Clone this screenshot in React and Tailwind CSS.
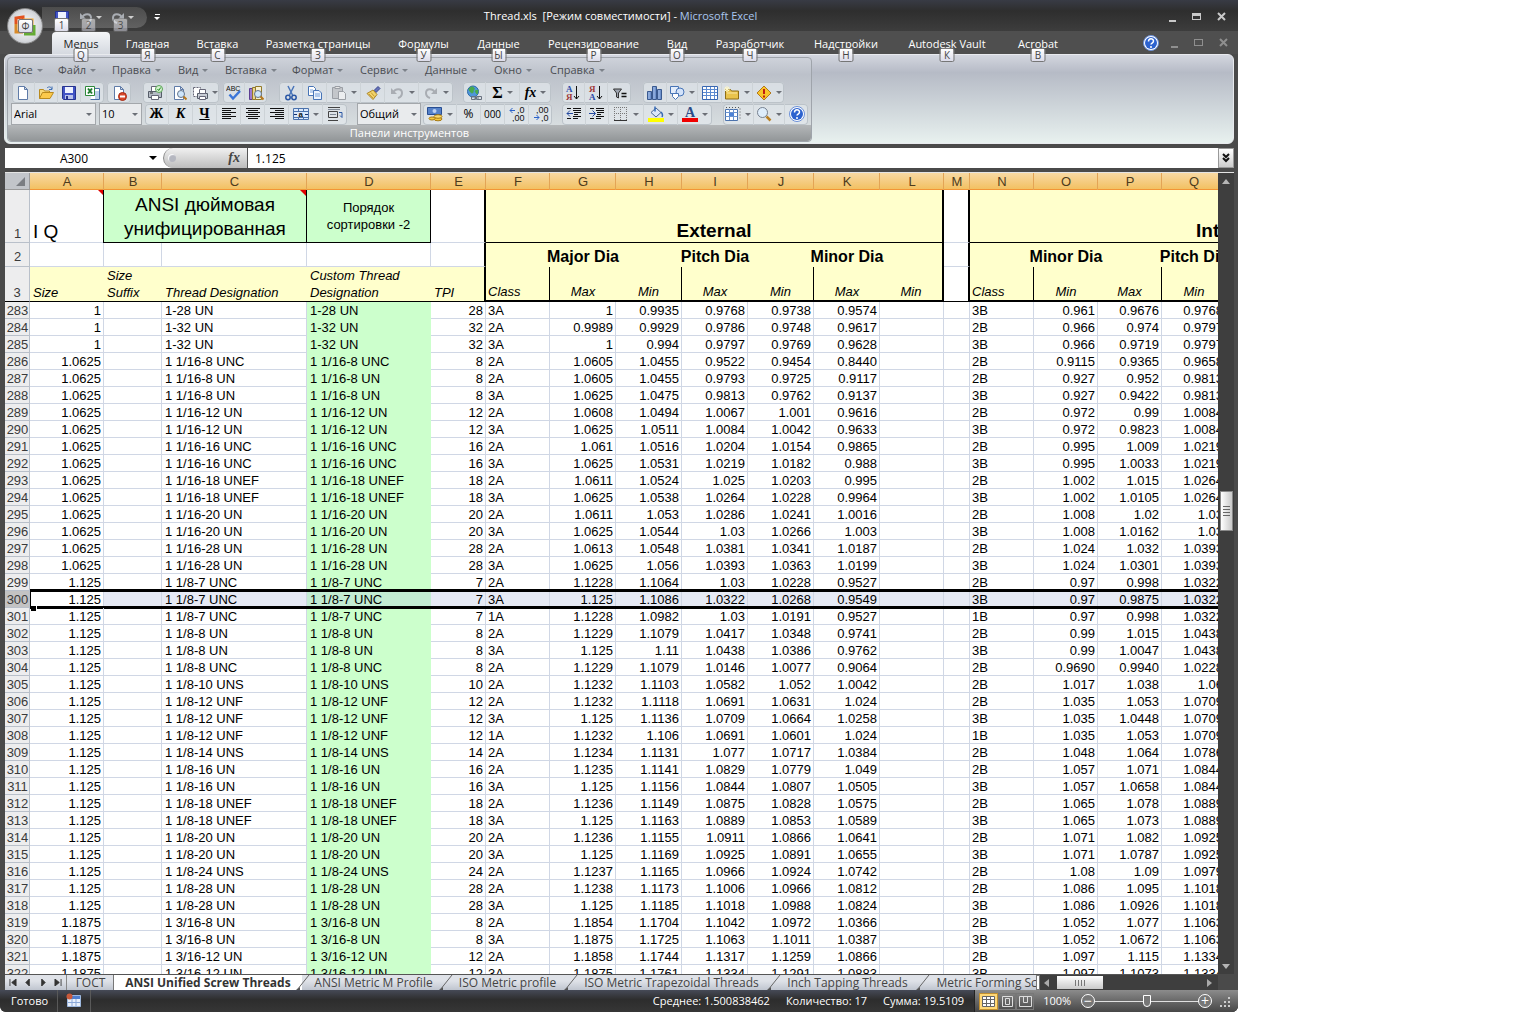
const tabs = [
  { label: 'Menus', hint: 'Q', width: 'w-[58px] mr-[2px]', active: true },
  { label: 'Главная', hint: 'Я', width: 'w-[71px]' },
  { label: 'Вставка', hint: 'С', width: 'w-[69px]' },
  { label: 'Разметка страницы', hint: 'З', width: 'w-[132px]' },
  { label: 'Формулы', hint: 'У', width: 'w-[79px]' },
  { label: 'Данные', hint: 'Ы', width: 'w-[71px]' },
  { label: 'Рецензирование', hint: 'Р', width: 'w-[119px]' },
  { label: 'Вид', hint: 'О', width: 'w-[48px]' },
  { label: 'Разработчик', hint: 'Ч', width: 'w-[98px]' },
  { label: 'Надстройки', hint: 'Н', width: 'w-[94px]' },
  { label: 'Autodesk Vault', hint: 'К', width: 'w-[108px]' },
  { label: 'Acrobat', hint: 'В', width: 'w-[74px]' },
];

const menus = [
  ['Все', 'w-[44px]'],
  ['Файл', 'w-[54px]'],
  ['Правка', 'w-[66px]'],
  ['Вид', 'w-[47px]'],
  ['Вставка', 'w-[67px]'],
  ['Формат', 'w-[68px]'],
  ['Сервис', 'w-[65px]'],
  ['Данные', 'w-[69px]'],
  ['Окно', 'w-[56px]'],
  ['Справка', 'w-[60px]'],
];

const columns = [
  ['A', 'w-[74px]'],
  ['B', 'w-[58px]'],
  ['C', 'w-[145px]'],
  ['D', 'w-[124px]'],
  ['E', 'w-[55px]'],
  ['F', 'w-[64px]'],
  ['G', 'w-[66px]'],
  ['H', 'w-[66px]'],
  ['I', 'w-[66px]'],
  ['J', 'w-[66px]'],
  ['K', 'w-[66px]'],
  ['L', 'w-[64px]'],
  ['M', 'w-[26px]'],
  ['N', 'w-[64px]'],
  ['O', 'w-[64px]'],
  ['P', 'w-[64px]'],
  ['Q', 'w-[64px]'],
];

// row | size | designation | tpi | class | G H I J K | class | O P Q
const data = `283|1|1-28 UN|28|3A|1|0.9935|0.9768|0.9738|0.9574|3B|0.961|0.9676|0.9768
284|1|1-32 UN|32|2A|0.9989|0.9929|0.9786|0.9748|0.9617|2B|0.966|0.974|0.9797
285|1|1-32 UN|32|3A|1|0.994|0.9797|0.9769|0.9628|3B|0.966|0.9719|0.9797
286|1.0625|1 1/16-8 UNC|8|2A|1.0605|1.0455|0.9522|0.9454|0.8440|2B|0.9115|0.9365|0.9658
287|1.0625|1 1/16-8 UN|8|2A|1.0605|1.0455|0.9793|0.9725|0.9117|2B|0.927|0.952|0.9813
288|1.0625|1 1/16-8 UN|8|3A|1.0625|1.0475|0.9813|0.9762|0.9137|3B|0.927|0.9422|0.9813
289|1.0625|1 1/16-12 UN|12|2A|1.0608|1.0494|1.0067|1.001|0.9616|2B|0.972|0.99|1.0084
290|1.0625|1 1/16-12 UN|12|3A|1.0625|1.0511|1.0084|1.0042|0.9633|3B|0.972|0.9823|1.0084
291|1.0625|1 1/16-16 UNC|16|2A|1.061|1.0516|1.0204|1.0154|0.9865|2B|0.995|1.009|1.0219
292|1.0625|1 1/16-16 UNC|16|3A|1.0625|1.0531|1.0219|1.0182|0.988|3B|0.995|1.0033|1.0219
293|1.0625|1 1/16-18 UNEF|18|2A|1.0611|1.0524|1.025|1.0203|0.995|2B|1.002|1.015|1.0264
294|1.0625|1 1/16-18 UNEF|18|3A|1.0625|1.0538|1.0264|1.0228|0.9964|3B|1.002|1.0105|1.0264
295|1.0625|1 1/16-20 UN|20|2A|1.0611|1.053|1.0286|1.0241|1.0016|2B|1.008|1.02|1.03
296|1.0625|1 1/16-20 UN|20|3A|1.0625|1.0544|1.03|1.0266|1.003|3B|1.008|1.0162|1.03
297|1.0625|1 1/16-28 UN|28|2A|1.0613|1.0548|1.0381|1.0341|1.0187|2B|1.024|1.032|1.0393
298|1.0625|1 1/16-28 UN|28|3A|1.0625|1.056|1.0393|1.0363|1.0199|3B|1.024|1.0301|1.0393
299|1.125|1 1/8-7 UNC|7|2A|1.1228|1.1064|1.03|1.0228|0.9527|2B|0.97|0.998|1.0322
300|1.125|1 1/8-7 UNC|7|3A|1.125|1.1086|1.0322|1.0268|0.9549|3B|0.97|0.9875|1.0322
301|1.125|1 1/8-7 UNC|7|1A|1.1228|1.0982|1.03|1.0191|0.9527|1B|0.97|0.998|1.0322
302|1.125|1 1/8-8 UN|8|2A|1.1229|1.1079|1.0417|1.0348|0.9741|2B|0.99|1.015|1.0438
303|1.125|1 1/8-8 UN|8|3A|1.125|1.11|1.0438|1.0386|0.9762|3B|0.99|1.0047|1.0438
304|1.125|1 1/8-8 UNC|8|2A|1.1229|1.1079|1.0146|1.0077|0.9064|2B|0.9690|0.9940|1.0228
305|1.125|1 1/8-10 UNS|10|2A|1.1232|1.1103|1.0582|1.052|1.0042|2B|1.017|1.038|1.06
306|1.125|1 1/8-12 UNF|12|2A|1.1232|1.1118|1.0691|1.0631|1.024|2B|1.035|1.053|1.0709
307|1.125|1 1/8-12 UNF|12|3A|1.125|1.1136|1.0709|1.0664|1.0258|3B|1.035|1.0448|1.0709
308|1.125|1 1/8-12 UNF|12|1A|1.1232|1.106|1.0691|1.0601|1.024|1B|1.035|1.053|1.0709
309|1.125|1 1/8-14 UNS|14|2A|1.1234|1.1131|1.077|1.0717|1.0384|2B|1.048|1.064|1.0786
310|1.125|1 1/8-16 UN|16|2A|1.1235|1.1141|1.0829|1.0779|1.049|2B|1.057|1.071|1.0844
311|1.125|1 1/8-16 UN|16|3A|1.125|1.1156|1.0844|1.0807|1.0505|3B|1.057|1.0658|1.0844
312|1.125|1 1/8-18 UNEF|18|2A|1.1236|1.1149|1.0875|1.0828|1.0575|2B|1.065|1.078|1.0889
313|1.125|1 1/8-18 UNEF|18|3A|1.125|1.1163|1.0889|1.0853|1.0589|3B|1.065|1.073|1.0889
314|1.125|1 1/8-20 UN|20|2A|1.1236|1.1155|1.0911|1.0866|1.0641|2B|1.071|1.082|1.0925
315|1.125|1 1/8-20 UN|20|3A|1.125|1.1169|1.0925|1.0891|1.0655|3B|1.071|1.0787|1.0925
316|1.125|1 1/8-24 UNS|24|2A|1.1237|1.1165|1.0966|1.0924|1.0742|2B|1.08|1.09|1.0979
317|1.125|1 1/8-28 UN|28|2A|1.1238|1.1173|1.1006|1.0966|1.0812|2B|1.086|1.095|1.1018
318|1.125|1 1/8-28 UN|28|3A|1.125|1.1185|1.1018|1.0988|1.0824|3B|1.086|1.0926|1.1018
319|1.1875|1 3/16-8 UN|8|2A|1.1854|1.1704|1.1042|1.0972|1.0366|2B|1.052|1.077|1.1063
320|1.1875|1 3/16-8 UN|8|3A|1.1875|1.1725|1.1063|1.1011|1.0387|3B|1.052|1.0672|1.1063
321|1.1875|1 3/16-12 UN|12|2A|1.1858|1.1744|1.1317|1.1259|1.0866|2B|1.097|1.115|1.1334
322|1.1875|1 3/16-12 UN|12|3A|1.1875|1.1761|1.1334|1.1291|1.0883|3B|1.097|1.1073|1.1334`
  .split('\n')
  .map((line) => line.split('|'));

const sheets = [
  { name: 'ГОСТ', width: 'w-[47px]' },
  { name: 'ANSI Unified Screw Threads', width: 'w-[188px]', active: true },
  { name: 'ANSI Metric M Profile', width: 'w-[143px]' },
  { name: 'ISO Metric profile', width: 'w-[125px]' },
  { name: 'ISO Metric Trapezoidal Threads', width: 'w-[203px]' },
  { name: 'Inch Tapping Threads', width: 'w-[149px]' },
  { name: 'Metric Forming Screws', width: 'w-[156px]' },
];

function Svg({ children, size = 'size-4' }) {
  return (
    <svg viewBox="0 0 16 16" className={`${size} shrink-0`} fill="none" aria-hidden="true">
      {children}
    </svg>
  );
}

const page = <path d="M3.5 1.5h6l3 3v10h-9z M9.5 1.5v3h3" fill="#fff" stroke="#5f7ba8" />;
const lens = (
  <>
    <circle cx="10" cy="9" r="3.5" fill="#cfe6fb" stroke="#64748b" />
    <path d="M12.5 11.5l3 3" stroke="#b7791f" strokeWidth="2" />
  </>
);
const printer = (
  <>
    <path d="M4.500 1.500h8v5h-8z" fill="#fff" stroke="#667" />
    <path d="M1.500 6.500h13v6h-13z" fill="#b4bac4" stroke="#555c68" />
    <path d="M4.500 10.500h7v4h-7z" fill="#fff" stroke="#667" />
    <path d="M3 8h3" stroke="#333" />
  </>
);
const clipboard = (
  <>
    <path d="M1.500 2.500h10v11h-10z" fill="#c3c6ca" stroke="#9b9fa5" />
    <path d="M4 1.500h5v2h-5z" fill="#e6e6e6" stroke="#9b9fa5" />
    <path d="M7.500 6.500h5l2 2v6h-7z" fill="#eceef0" stroke="#9b9fa5" />
  </>
);

const icons = {
  fresh: <Svg>{page}</Svg>,
  open: (
    <Svg>
      <path d="M1.500 13.500v-9h4l1 1.500h5v2" fill="#f8d878" stroke="#b98a1e" />
      <path d="M1.500 13.500l3-6h11l-3.500 6z" fill="#fbc94c" stroke="#b98a1e" />
      <path d="M9 3c2-2 4-1 5 1m0-2.500v3h-3" stroke="#3f6fb5" />
    </Svg>
  ),
  save: (
    <Svg>
      <path d="M1.500 1.500h13v13h-12l-1-1z" fill="#4254c5" stroke="#26348f" />
      <path d="M4 2h8v6H4z" fill="#eef2ff" />
      <path d="M4 10h8v4H4z" fill="#b9c2ea" />
      <path d="M5 11h2v3H5z" fill="#26348f" />
    </Svg>
  ),
  excel: (
    <Svg>
      <path d="M8.500 3.500h6v11h-9" fill="#fff" stroke="#4a6fa5" />
      <path d="M10 7h4m-4 2h4m-4 2h4M10 13h4" stroke="#7aa0d4" />
      <path d="M.5 1.500h9v9h-9z" fill="#fff" stroke="#2f8a3c" />
      <path d="M3 3.500l4 5m0-5l-4 5" stroke="#1d7a2c" strokeWidth="2" />
    </Svg>
  ),
  blocked: (
    <Svg>
      {page}
      <circle cx="11.500" cy="11.500" r="4" fill="#d9482b" stroke="#a52a14" />
      <path d="M9 11.500h5" stroke="#fff" strokeWidth="2" />
    </Svg>
  ),
  quickPrint: (
    <Svg>
      {printer}
      <circle cx="12" cy="4" r="3.500" fill="#d5f0cf" stroke="#5aa357" />
      <path d="M10.500 4l1.200 1.500 2-3" stroke="#16891c" />
    </Svg>
  ),
  preview: (
    <Svg>
      {page}
      {lens}
    </Svg>
  ),
  print: (
    <Svg>
      <path d="M1.500 2.500h7v9h-7z" fill="#fff" stroke="#667" strokeDasharray="2 1" />
      <path d="M5.500 8.500h10v5h-10z" fill="#c8cdd5" stroke="#555c68" />
      <path d="M7.500 4.500h6v4h-6zM7.500 11.500h6v3h-6z" fill="#fff" stroke="#667" />
    </Svg>
  ),
  spelling: (
    <Svg>
      <text x="0" y="6" fontSize="7" fill="#111" fontFamily="Liberation Sans">ABC</text>
      <path d="M3.500 9.500l3.500 4L14 6" stroke="#3a75d8" strokeWidth="2.500" />
    </Svg>
  ),
  research: (
    <Svg>
      <path d="M1.500 3.500h3v11h-3z" fill="#9d7bd0" stroke="#5d3e92" />
      <path d="M4.500 2.500h3v12h-3z" fill="#e9d491" stroke="#927a29" />
      <path d="M7.500 1.500h6v13h-6z" fill="#f7efcf" stroke="#927a29" />
      {lens}
    </Svg>
  ),
  cut: (
    <Svg>
      <path d="M5 1l4.500 9M11 1L6.500 10" stroke="#4a75b8" strokeWidth="1.500" />
      <circle cx="5" cy="12.500" r="2.200" stroke="#2a57a5" strokeWidth="1.500" />
      <circle cx="11" cy="12.500" r="2.200" stroke="#2a57a5" strokeWidth="1.500" />
    </Svg>
  ),
  copy: (
    <Svg>
      <path d="M1.500 1.500h5l2 2v7h-7z" fill="#fff" stroke="#4774b6" />
      <path d="M6.500 5.500h5.500l2.500 2.500v6.500h-8z" fill="#eaf2fd" stroke="#4774b6" />
      <path d="M8 9h5m-5 2h5M3 5h3M3 7h3" stroke="#77a0da" />
    </Svg>
  ),
  paste: <Svg>{clipboard}</Svg>,
  brush: (
    <Svg>
      <path d="M9 5.500L13 1.500l2 2-4 4z" fill="#6673b9" stroke="#39468f" />
      <path d="M2 8.500l6-3.500 4 4.500-4 5z" fill="#f2d36a" stroke="#ab8426" />
      <path d="M4 9l4 4M6 7.500l3.500 4" stroke="#c79c33" />
    </Svg>
  ),
  undo: (
    <Svg>
      <path d="M4 8c2-5 9-5 9 0 0 2-1 4-4 5" stroke="#a9adb3" strokeWidth="2" />
      <path d="M2 3v6h6z" fill="#a9adb3" />
    </Svg>
  ),
  redo: (
    <Svg>
      <path d="M12 8c-2-5-9-5-9 0 0 2 1 4 4 5" stroke="#a9adb3" strokeWidth="2" />
      <path d="M14 3v6H8z" fill="#a9adb3" />
    </Svg>
  ),
  link: (
    <Svg>
      <circle cx="7" cy="6.500" r="5.500" fill="#4f96d9" stroke="#2b6ba8" />
      <path d="M3 4c2-3 4-2 5-1s-1 2-1 4-3 1-4-3zM9 6l3-1-1 4z" fill="#48aa4b" stroke="#48aa4b" />
      <path d="M5.500 11.500h4v3h-4zM10.500 11.500h5v3h-5zM8 13h5" stroke="#68717f" />
    </Svg>
  ),
  sum: <span className="font-['Liberation_Serif',serif] text-base leading-4 font-bold">Σ</span>,
  fx: <span className="font-['Liberation_Serif',serif] text-sm leading-4 font-bold italic">fx</span>,
  sortUp: (
    <Svg>
      <text x="1" y="7" fontSize="9" fontWeight="bold" fill="#2949a8" fontFamily="Liberation Serif">А</text>
      <text x="1" y="15" fontSize="9" fontWeight="bold" fill="#a03838" fontFamily="Liberation Serif">Я</text>
      <path d="M11.500 1v13M9 11l2.500 3 2.500-3" stroke="#111" />
    </Svg>
  ),
  sortDown: (
    <Svg>
      <text x="1" y="7" fontSize="9" fontWeight="bold" fill="#a03838" fontFamily="Liberation Serif">Я</text>
      <text x="1" y="15" fontSize="9" fontWeight="bold" fill="#2949a8" fontFamily="Liberation Serif">А</text>
      <path d="M11.500 1v13M9 11l2.500 3 2.500-3" stroke="#111" />
    </Svg>
  ),
  filter: (
    <Svg>
      <path d="M1.500 4h8L6.500 8v5l-2-1V8z" fill="#9ca3af" stroke="#333" />
      <path d="M9.500 8.500h5m-5 3h5" stroke="#111" strokeWidth="1.500" />
    </Svg>
  ),
  chart: (
    <Svg>
      <path d="M.5 6.500h4v8h-4zM5.500 1.500h4v13h-4zM10.500 4.500h4v10h-4z" fill="#6f92cc" stroke="#39598f" />
      <path d="M2 7v7M7 2v12M12 5v9" stroke="#a6c0ea" />
    </Svg>
  ),
  shapes: (
    <Svg>
      <path d="M1.500 1.500h8v7h-8z" fill="#e3edfb" stroke="#4774b6" />
      <circle cx="11" cy="7" r="4" fill="#d3e3fa" stroke="#4774b6" />
      <path d="M3.500 8.500h6v3l-3 3-3-3z" fill="#fff" stroke="#4774b6" />
    </Svg>
  ),
  table: (
    <Svg>
      <path d="M.5 1.500h15v13H.5z" fill="#fff" stroke="#3866b0" />
      <path d="M1 4.500h14M1 7.500h14M1 10.500h14M4.500 2v12M8.500 2v12M12.500 2v12" stroke="#5c8ad0" />
    </Svg>
  ),
  folder: (
    <Svg>
      <path d="M1.500 4.500h5l1 1.500h7v8h-13z" fill="#e9c34c" stroke="#8f6d15" />
      <path d="M3 8h10" stroke="#f9e6a2" />
      <path d="M3 1v6M0 4h6M1 2l4 4M5 2L1 6" stroke="#fff8c8" />
    </Svg>
  ),
  warning: (
    <Svg>
      <path d="M8 1l7 7-7 7-7-7z" fill="#f8c62b" stroke="#b4781b" />
      <path d="M8 4v5m0 1.500v2" stroke="#c11e12" strokeWidth="2" />
    </Svg>
  ),
  bold: <span className="font-['Liberation_Serif',serif] text-sm leading-4 font-bold">Ж</span>,
  italic: <span className="font-['Liberation_Serif',serif] text-sm leading-4 font-bold italic">К</span>,
  underline: <span className="font-['Liberation_Serif',serif] text-sm leading-4 font-bold underline">Ч</span>,
  left: (
    <Svg>
      <path d="M1 2.500h14M1 4.500h9M1 6.500h14M1 8.500h9M1 10.500h14M1 12.500h9" stroke="#111" />
    </Svg>
  ),
  center: (
    <Svg>
      <path d="M1 2.500h14M3 4.500h10M1 6.500h14M3 8.500h10M1 10.500h14M3 12.500h10" stroke="#111" />
    </Svg>
  ),
  right: (
    <Svg>
      <path d="M1 2.500h14M6 4.500h9M1 6.500h14M6 8.500h9M1 10.500h14M6 12.500h9" stroke="#111" />
    </Svg>
  ),
  merge: (
    <Svg>
      <path d="M.5 2.500h15v11H.5z" fill="#dbe8fa" stroke="#4b72ac" />
      <path d="M.5 5.500h15M.5 11.500h15M5.500 2.500v3M10.500 2.500v3M5.500 11.500v2M10.500 11.500v2" stroke="#4b72ac" />
      <text x="5.500" y="10.500" fontSize="8" fontWeight="bold" fill="#111" fontFamily="Liberation Sans">a</text>
      <path d="M1 8.500h3m8 0h3" stroke="#16316b" />
    </Svg>
  ),
  wrap: (
    <Svg>
      <path d="M1 1.500h12M1 14.500h10M1.500 5.500h9v6h-9z" stroke="#444" />
      <path d="M3 8.500h6M1 3.500h12" stroke="#7d8794" />
      <path d="M12 6.500h3v5m-2-2l2 2" stroke="#2a57a5" />
    </Svg>
  ),
  money: (
    <Svg>
      <path d="M.5 1.500h14v7H.5z" fill="#5581c8" stroke="#274d92" />
      <circle cx="7.500" cy="5" r="2" fill="#bad0f3" />
      <ellipse cx="11" cy="13" rx="4" ry="1.800" fill="#f5c83f" stroke="#a77a12" />
      <ellipse cx="11" cy="10.500" rx="4" ry="1.800" fill="#f9da6e" stroke="#a77a12" />
      <ellipse cx="5" cy="12.500" rx="3" ry="1.500" fill="#f5c83f" stroke="#a77a12" />
    </Svg>
  ),
  percent: <span className="text-xs leading-4">%</span>,
  thousands: <span className="text-[10px] leading-4">000</span>,
  moreDigits: (
    <Svg>
      <text x="8" y="7" fontSize="9" fill="#111" fontFamily="Liberation Sans">,0</text>
      <text x="3" y="15" fontSize="9" fill="#111" fontFamily="Liberation Sans">,00</text>
      <path d="M1 4.500h5M3.500 2L1 4.500 3.500 7" stroke="#2a62c9" />
    </Svg>
  ),
  lessDigits: (
    <Svg>
      <text x="3" y="7" fontSize="9" fill="#111" fontFamily="Liberation Sans">,00</text>
      <text x="8" y="15" fontSize="9" fill="#111" fontFamily="Liberation Sans">,0</text>
      <path d="M1 11.500h5M3.500 9L6 11.500 3.500 14" stroke="#2a62c9" />
    </Svg>
  ),
  indent: (
    <Svg>
      <path d="M1 2.500h4M7 2.500h8M7 4.500h8M8 6.500h7M8 8.500h4M7 10.500h8M7 12.500h5M1 12.500h4" stroke="#111" />
      <path d="M0 7.500h6M3.500 4.500l3 3-3 3" stroke="#2449a0" />
    </Svg>
  ),
  outdent: (
    <Svg>
      <path d="M1 2.500h4M7 2.500h8M7 4.500h8M8 6.500h7M8 8.500h4M7 10.500h8M7 12.500h5M1 12.500h4" stroke="#111" />
      <path d="M1 7.500h6M4 4.500l-3 3 3 3" stroke="#2449a0" />
    </Svg>
  ),
  borders: (
    <Svg>
      <path d="M1.500 1v13M7.500 1v13M13.500 1v13M1 1.500h13M1 7.500h13" stroke="#777" strokeDasharray="1 1" />
      <path d="M1 14.500h13" stroke="#333" />
    </Svg>
  ),
  fill: (
    <Svg>
      <path d="M3 6.500L8 2l5 4.500-5 4.500z" fill="#dbe7f8" stroke="#4a6898" />
      <path d="M7 .5v5M13 6c2 2 2 3 1 5" stroke="#3569b5" strokeWidth="1.500" />
      <path d="M0 12h16v4H0z" fill="#ffff00" />
    </Svg>
  ),
  fontColor: (
    <Svg>
      <text x="3" y="11" fontSize="14" fontWeight="bold" fill="#2c4c88" fontFamily="Liberation Serif">A</text>
      <path d="M0 12h16v4H0z" fill="#f00000" />
    </Svg>
  ),
  freeze: (
    <Svg>
      <path d="M.5 3.500h12v11H.5z" fill="#fff" stroke="#4b72ac" />
      <path d="M.5 6.500h12M.5 10.500h12M4.500 3v11M8.500 3v11" stroke="#6b94d0" />
      <path d="M4 7h5v3H4z" fill="#4d82d6" />
      <path d="M1 1.500h14v13" stroke="#555" strokeDasharray="1 2" />
    </Svg>
  ),
  zoom: (
    <Svg>
      <circle cx="6.500" cy="6.500" r="5" fill="#deedfb" stroke="#75808f" />
      <path d="M10.500 10.500l4 4" stroke="#b98023" strokeWidth="2.500" />
    </Svg>
  ),
  help: <HelpIcon />,
};

function HelpIcon() {
  return (
    <Svg>
      <circle cx="8" cy="8" r="7.500" fill="#fff" stroke="#6a8fd8" />
      <circle cx="8" cy="8" r="6" fill="#2c62cf" />
      <path d="M5.500 6.500c0-3.500 5-3.500 5-.5 0 2-2.500 2-2.500 3.500M8 11v2" stroke="#fff" strokeWidth="1.500" />
    </Svg>
  );
}

// [icon, label, width, has arrow]
const topGroups = [
  { gap: '', items: [['fresh', 'Создать', 'w-[23px]'], ['open', 'Открыть', 'w-[23px]'], ['save', 'Сохранить', 'w-[23px]'], ['excel', 'Сохранить как', 'w-[23px]']] },
  { gap: 'ml-[3px]', items: [['blocked', 'Разрешения', 'w-6']] },
  { gap: 'ml-3', items: [['quickPrint', 'Быстрая печать', 'w-6'], ['preview', 'Просмотр', 'w-6'], ['print', 'Печать', 'w-7', true]] },
  { gap: 'ml-1', items: [['spelling', 'Орфография', 'w-[22px]'], ['research', 'Справочники', 'w-[22px]']] },
  { gap: 'ml-3', items: [['cut', 'Вырезать', 'w-6'], ['copy', 'Копировать', 'w-6'], ['paste', 'Вставить', 'w-[34px]', true], ['brush', 'Формат по образцу', 'w-6'], ['undo', 'Отменить', 'w-[34px]', true], ['redo', 'Вернуть', 'w-[34px]', true]] },
  { gap: 'ml-[10px]', items: [['link', 'Гиперссылка', 'w-[23px]'], ['sum', 'Сумма', 'w-[34px]', true], ['fx', 'Функция', 'w-[31px]', true]] },
  { gap: 'ml-[11px]', items: [['sortUp', 'По возрастанию', 'w-[23px]'], ['sortDown', 'По убыванию', 'w-[23px]'], ['filter', 'Фильтр', 'w-[23px]']] },
  { gap: 'ml-3', items: [['chart', 'Диаграмма', 'w-6'], ['shapes', 'Фигуры', 'w-[31px]', true], ['table', 'Таблица', 'w-6'], ['folder', 'Папка', 'w-[31px]', true], ['warning', 'Проверка', 'w-[31px]', true]] },
];

const alignGroup = [['bold', 'Полужирный', 'w-6'], ['italic', 'Курсив', 'w-6'], ['underline', 'Подчеркнутый', 'w-6'], ['left', 'По левому краю', 'w-6'], ['center', 'По центру', 'w-6'], ['right', 'По правому краю', 'w-6'], ['merge', 'Объединить', 'w-[34px]', true], ['wrap', 'Перенос текста', 'w-6']];
const numberGroup = [['money', 'Денежный формат', 'w-[34px]', true], ['percent', 'Проценты', 'w-6'], ['thousands', 'Разделители', 'w-6'], ['moreDigits', 'Увеличить разрядность', 'w-6'], ['lessDigits', 'Уменьшить разрядность', 'w-[23px]']];
const cellGroup = [['outdent', 'Уменьшить отступ', 'w-6'], ['indent', 'Увеличить отступ', 'w-[23px]'], ['borders', 'Границы', 'w-[35px]', true], ['fill', 'Цвет заливки', 'w-[34px]', true], ['fontColor', 'Цвет текста', 'w-[34px]', true]];
const viewGroup = [['freeze', 'Закрепить области', 'w-[31px]', true], ['zoom', 'Масштаб', 'w-[31px]', true], ['help', 'Справка Excel', 'w-[23px]']];

function Arrow({ className = 'border-t-[#6b6f76]' }) {
  return <span className={`inline-block shrink-0 border-x-[3px] border-t-[3px] border-x-transparent ${className}`} />;
}

function ToolGroup({ items, gap = '' }) {
  return (
    <div className={`${gap} flex h-[21px] shrink-0 rounded-sm bg-[#e3e8ec]/70 ring-1 ring-[#bcc3c9] ring-inset`}>
      {items.map(([icon, label, width, arrow]) => (
        <button key={icon} aria-label={label} className={`${width} flex shrink-0 items-center justify-center gap-1 border-r border-[#cdd3d7] text-black last:border-r-0`}>
          {icons[icon]}
          {arrow && <Arrow />}
        </button>
      ))}
    </div>
  );
}

function Picker({ label, value, className }) {
  return (
    <label className={`relative flex h-[22px] shrink-0 items-center border border-[#a3a7ab] bg-[#e9ebed] ${className}`}>
      <select aria-label={label} className="w-full appearance-none bg-transparent pl-[2px] text-[11px] text-black outline-none">
        <option>{value}</option>
      </select>
      <Arrow className="absolute right-[3px] border-t-[#6b6f76]" />
    </label>
  );
}

function KeyHint({ children, className = '' }) {
  return (
    <span className={`absolute z-20 flex h-[14px] w-[15px] items-center justify-center rounded-xs border border-[#767676] bg-gradient-to-b from-white to-[#dcdcea] text-[10px] leading-3 text-[#444] ${className}`}>
      {children}
    </span>
  );
}

function TitleBar() {
  return (
    <header className="relative flex h-[31px] shrink-0 items-center justify-between bg-gradient-to-b from-[#383b45] from-0% via-[#2e2e2e] via-35% to-[#3d3d3d] pt-[2px] pr-3">
      <button aria-label="Office" className="absolute top-2 left-[7px] z-30 flex size-9 items-center justify-center rounded-full border border-[#888] bg-[radial-gradient(circle,#fff,#d8dade_60%,#a9adb3)]">
        <svg viewBox="0 0 24 24" className="size-6" fill="none" strokeWidth="3">
          <path d="M3 10V4l7-1v6" stroke="#e2521f" />
          <path d="M10 6h9v7" stroke="#f3a32b" />
          <path d="M3 10v8h7" stroke="#d88a29" />
          <path d="M11 20h10v-9" stroke="#65ab35" />
        </svg>
        <KeyHint className="top-[10px] left-[10px]">Ф</KeyHint>
      </button>
      <div className="mb-[3px] ml-[42px] flex h-[21px] w-[105px] items-center gap-1 self-end rounded-r-full bg-gradient-to-b from-[#4c4c4c] to-[#616161] pl-2">
        <button aria-label="Сохранить" className="relative ml-1">
          {icons.save}
          <KeyHint className="top-2 left-0">1</KeyHint>
        </button>
        <button aria-label="Отменить" className="relative ml-1 flex items-center gap-[2px]">
          {icons.undo}
          <Arrow className="border-t-[#cfcfcf]" />
          <KeyHint className="top-2 left-[3px] opacity-50">2</KeyHint>
        </button>
        <button aria-label="Вернуть" className="relative ml-1 flex items-center gap-[2px]">
          {icons.redo}
          <Arrow className="border-t-[#cfcfcf]" />
          <KeyHint className="top-2 left-[3px] opacity-50">3</KeyHint>
        </button>
      </div>
      <button aria-label="Настройка панели" className="ml-[7px] flex flex-col items-center gap-[2px]">
        <span className="h-px w-[5px] bg-white" />
        <Arrow className="border-t-white" />
      </button>
      <h1 className="flex-1 pr-[88px] text-center text-[11px] whitespace-pre text-white">
        Thread.xls  [Режим совместимости] - <span className="text-[#a9c6ee]">Microsoft Excel</span>
      </h1>
      <WindowButtons className="text-[#c9c9c9]" />
    </header>
  );
}

function WindowButtons({ className, inner }) {
  return (
    <div className={`flex items-center gap-4 ${className}`}>
      <button aria-label="Свернуть" className="mt-2 h-[2px] w-[7px] bg-current" />
      <button aria-label="Восстановить" className={`h-[7px] w-[9px] border border-current ${inner ? '' : 'border-t-[3px]'}`} />
      <button aria-label="Закрыть">
        <svg viewBox="0 0 9 9" className="size-[9px]" stroke="currentColor" strokeWidth="2">
          <path d="M1 1l7 7M8 1L1 8" />
        </svg>
      </button>
    </div>
  );
}

function Ribbon() {
  return (
    <>
      <nav className="flex h-[23px] shrink-0 items-end bg-[#4f4f4f] pr-[10px] pl-[52px]">
        {tabs.map((tab) => (
          <button
            key={tab.label}
            className={`${tab.width} relative flex h-[22px] shrink-0 justify-center pt-px text-[11px] leading-[22px] whitespace-nowrap ${tab.active ? 'rounded-t-sm bg-gradient-to-b from-[#f4f6f8] to-[#d5d9e0] text-[#222]' : 'text-white'}`}
          >
            {tab.label}
            <KeyHint className="top-[16px] left-1/2 -translate-x-1/2">{tab.hint}</KeyHint>
          </button>
        ))}
        <div className="ml-auto flex items-center gap-3 self-center">
          <button aria-label="Справка" className="flex items-center">
            <HelpIcon />
          </button>
          <WindowButtons inner className="text-[#8f8f8f]" />
        </div>
      </nav>
      <section className="mx-[4px] h-[90px] shrink-0 rounded-md border border-[#e8eaee] bg-gradient-to-b from-[#d3d6df] from-0% via-[#b6bbc6] via-20% to-[#e8f1ef] p-[2px]">
        <div className="flex h-[85px] w-[805px] flex-col rounded-sm border border-[#9fa4ab] bg-gradient-to-b from-[#ced2da] via-[#bcc1ca] via-20% to-[#e0e6e6]">
          <div className="flex h-6 shrink-0 items-center pl-[6px]">
            {menus.map(([name, width], i) => (
              <button key={i} className={`${width} flex shrink-0 items-center gap-1 text-[11px] whitespace-nowrap text-[#4a4d52]`}>
                {name}
                <Arrow className="border-t-[#7d828a]" />
              </button>
            ))}
          </div>
          <div className="flex shrink-0 pl-1">
            {topGroups.map((group, i) => (
              <ToolGroup key={i} items={group.items} gap={group.gap} />
            ))}
          </div>
          <div className="flex shrink-0 items-center pl-[3px] text-black">
            <Picker label="Шрифт" value="Arial" className="w-[85px]" />
            <Picker label="Размер" value="10" className="ml-[3px] w-[43px]" />
            <ToolGroup items={alignGroup} gap="ml-[3px]" />
            <Picker label="Числовой формат" value="Общий" className="ml-[10px] w-[64px]" />
            <ToolGroup items={numberGroup} gap="ml-[2px]" />
            <ToolGroup items={cellGroup} gap="ml-[10px]" />
            <ToolGroup items={viewGroup} gap="ml-[11px]" />
          </div>
          <div className="mt-auto flex h-4 items-center justify-center rounded-b-sm bg-gradient-to-b from-[#b4b7b9] to-[#929698] text-[11px] text-white">Панели инструментов</div>
        </div>
      </section>
    </>
  );
}

function FormulaBar() {
  return (
    <div className="mt-1 mr-1 ml-[5px] flex h-5 shrink-0 bg-white text-black">
      <input aria-label="Имя" defaultValue="A300" className="w-[138px] bg-white pt-px text-center text-xs outline-none" />
      <button aria-label="Список имен" className="flex w-5 items-center justify-center">
        <span className="border-x-4 border-t-4 border-x-transparent border-t-black" />
      </button>
      <div className="flex w-[84px] items-center justify-between rounded-l-full border-l border-[#8a8a8a] bg-gradient-to-b from-[#f1f1f1] to-[#bdbdbd] pr-[7px] pl-1">
        <span className="size-2 rounded-full bg-[#b5b7c0] shadow-[inset_1px_1px_1px_#fff]" />
        <button aria-label="Вставить функцию" className="font-['Liberation_Serif',serif] text-sm leading-4 font-bold text-[#444] italic">
          fx
        </button>
      </div>
      <input aria-label="Формула" defaultValue="1.125" className="min-w-0 flex-1 border-l border-[#555] bg-white pt-px pl-[7px] text-xs outline-none" />
      <button aria-label="Развернуть" className="flex w-4 items-center justify-center border border-[#999] bg-gradient-to-b from-white to-[#ccc]">
        <svg viewBox="0 0 8 10" className="h-[10px] w-2" fill="none" stroke="#111" strokeWidth="2">
          <path d="M1 1l3 3 3-3M1 5l3 3 3-3" />
        </svg>
      </button>
    </div>
  );
}

const grid = 'shadow-[inset_-1px_-1px_#d0d7e5]';
const rowHead = 'p-0 text-center font-normal text-[#3a3a3a] shadow-[inset_-1px_-1px_#b9c0ca]';
const yellow = 'bg-[#ffffcc]';
const green = 'bg-[#ccffcc]';

function Note() {
  return <span className="absolute top-0 right-0 border-t-[6px] border-l-[6px] border-t-[#e00000] border-l-transparent" />;
}

function SheetHead() {
  return (
    <>
      <tr className="h-[53px]">
        <th scope="row" className={`${rowHead} bg-[#ededee] pb-px align-bottom`}>1</th>
        <td className={`${grid} relative p-0 pl-[3px] align-bottom text-[19px] leading-[22px]`}>
          I Q
          <Note />
        </td>
        <td colSpan={2} className={`${green} relative border-r border-b border-black p-0 pt-px text-center text-[19px] leading-6 shadow-[-1px_0_#000]`}>
          ANSI дюймовая
          <br />
          унифицированная
          <Note />
        </td>
        <td className={`${green} border-r border-b border-black p-0 text-center leading-[17px]`}>
          Порядок
          <br />
          сортировки -2
        </td>
        <td className="border-r-2 border-b border-r-black border-b-[#d0d7e5]" />
        <td colSpan={7} className={`${yellow} border-r-2 border-b border-black p-0 text-center align-bottom text-[19px] leading-[22px] font-bold`}>External</td>
        <td className="border-r-2 border-b border-r-black border-b-[#d0d7e5]" />
        <td colSpan={4} className={`${yellow} border-b border-black p-0 align-bottom text-[19px] leading-[22px] font-bold`}>
          <div className="pl-[226px] whitespace-nowrap">Internal</div>
        </td>
      </tr>
      <tr className="h-6 align-bottom text-base leading-5 font-bold">
        <th scope="row" className={`${rowHead} bg-[#ededee] text-[13px]`}>2</th>
        <td className={grid} />
        <td className={grid} />
        <td className={grid} />
        <td className={grid} />
        <td className="border-r-2 border-b border-r-black border-b-[#d0d7e5]" />
        <td className={yellow} />
        {['Major Dia', '', 'Pitch Dia', '', 'Minor Dia'].map((name, i) => (
          <td key={i} className={`${yellow} p-0`}>
            <div className="flex justify-center whitespace-nowrap">{name}</div>
          </td>
        ))}
        <td className={`${yellow} border-r-2 border-black`} />
        <td className="border-r-2 border-b border-r-black border-b-[#d0d7e5]" />
        <td className={yellow} />
        {['Minor Dia', '', 'Pitch Dia'].map((name, i) => (
          <td key={i} className={`${yellow} p-0`}>
            <div className="flex justify-center whitespace-nowrap">{name}</div>
          </td>
        ))}
      </tr>
      <tr className="h-[35px] align-bottom leading-[17px] italic">
        <th scope="row" className="border-r border-b border-r-[#b9c0ca] border-b-black bg-[#ededee] p-0 text-center font-normal text-[#3a3a3a] not-italic">3</th>
        {['Size', 'Size Suffix', 'Thread Designation', 'Custom Thread Designation'].map((name) => (
          <td key={name} className={`${yellow} border-b border-black p-0 pl-[3px]`}>
            <div className={name === 'Size Suffix' ? 'w-10' : ''}>{name}</div>
          </td>
        ))}
        <td className={`${yellow} border-r-2 border-b border-black p-0 pl-[3px]`}>TPI</td>
        <td className={`${yellow} border-r border-b-2 border-black p-0 pl-[2px]`}>Class</td>
        {['Max', 'Min', 'Max', 'Min', 'Max', 'Min'].map((name, i) => (
          <td key={i} className={`${yellow} border-b-2 border-black p-0 text-center ${i === 1 || i === 3 ? 'border-r' : ''} ${i === 5 ? 'border-r-2' : ''}`}>
            {name}
          </td>
        ))}
        <td className="border-r-2 border-b border-black" />
        <td className={`${yellow} border-r border-b-2 border-black p-0 pl-[2px]`}>Class</td>
        {['Min', 'Max', 'Min'].map((name, i) => (
          <td key={i} className={`${yellow} border-b-2 border-black p-0 text-center ${i === 1 ? 'border-r' : ''}`}>
            {name}
          </td>
        ))}
      </tr>
    </>
  );
}

function DataRow({ row }) {
  const [no, size, name, tpi, cls, g, h, i, j, k, cls2, o, p, q] = row;
  const selected = no === '300';
  const num = `${grid} p-0 pr-[3px] text-right`;
  const text = `${grid} p-0 pl-[2px] whitespace-nowrap`;
  return (
    <tr className={`h-[17px] ${selected ? 'bg-[#e6eaf5]' : ''}`}>
      <th scope="row" className={`${rowHead} ${selected ? 'bg-[#c3c3c3]' : 'bg-[#ededee]'}`}>{no}</th>
      <td className={`${num} relative ${selected ? 'bg-white' : ''}`}>
        {size}
        {selected && (
          <span className="pointer-events-none absolute -top-[2px] left-0 h-5 w-[2000px] border-y-[3px] border-l border-black">
            <span className="absolute top-[13px] left-0 size-[6px] border-t border-r border-white bg-black" />
          </span>
        )}
      </td>
      <td className={grid} />
      <td className={`${grid} p-0 pl-[3px] whitespace-nowrap`}>{name}</td>
      <td className={`p-0 pl-[3px] whitespace-nowrap ${selected ? 'bg-[#c3ecd3]' : green}`}>{name}</td>
      <td className={num}>{tpi}</td>
      <td className={text}>{cls}</td>
      {[g, h, i, j, k].map((value, n) => (
        <td key={n} className={num}>{value}</td>
      ))}
      <td className={grid} />
      <td className={grid} />
      <td className={text}>{cls2}</td>
      {[o, p, q].map((value, n) => (
        <td key={n} className={num}>{value}</td>
      ))}
    </tr>
  );
}

function Sheet() {
  return (
    <div className="mt-1 mr-1 ml-[5px] flex min-h-0 flex-1 border-t border-[#e4e4e4]">
      <div className="min-w-0 flex-1 overflow-hidden bg-white font-['Liberation_Sans',Arial,sans-serif] text-[13px] leading-4 text-black">
        <table className="w-px table-fixed border-separate border-spacing-0">
          <colgroup>
            <col className="w-[25px]" />
            {columns.map(([name, width]) => (
              <col key={name} className={width} />
            ))}
          </colgroup>
          <thead>
            <tr className="h-[17px]">
              <th aria-label="Выделить все" className="border-r border-b border-[#9a9a9a] bg-[#c2c5ca] p-0">
                <span className="mr-1 ml-auto block w-0 border-b-[9px] border-l-[9px] border-b-[#7b7e83] border-l-transparent" />
              </th>
              {columns.map(([name]) => (
                <th key={name} scope="col" className="bg-gradient-to-b from-[#f8d9a2] to-[#f2bf5c] p-0 font-normal text-[#4d3b1c] shadow-[inset_-1px_0_#e3a455,inset_0_-1px_#f29536]">
                  {name}
                </th>
              ))}
            </tr>
          </thead>
          <tbody>
            <SheetHead />
            {data.map((row) => (
              <DataRow key={row[0]} row={row} />
            ))}
          </tbody>
        </table>
      </div>
      <div className="flex w-4 shrink-0 flex-col items-center bg-[#3e3e3e]">
        <button aria-label="Вверх" className="flex h-4 items-center">
          <span className="border-x-4 border-b-[5px] border-x-transparent border-b-[#b5b5b5]" />
        </button>
        <div className="flex-[302]" />
        <div className="flex h-10 w-[13px] flex-col items-center justify-center gap-[2px] border border-[#888] bg-gradient-to-r from-white to-[#c9c9c9]">
          <span className="h-px w-[7px] bg-[#666]" />
          <span className="h-px w-[7px] bg-[#666]" />
          <span className="h-px w-[7px] bg-[#666]" />
          <span className="h-px w-[7px] bg-[#666]" />
        </div>
        <div className="flex-[428]" />
        <button aria-label="Вниз" className="flex h-4 items-center">
          <span className="border-x-4 border-t-[5px] border-x-transparent border-t-[#b5b5b5]" />
        </button>
      </div>
    </div>
  );
}

function SheetTabs() {
  return (
    <div className="mr-5 ml-[5px] flex h-4 shrink-0 border-t border-[#555] bg-gradient-to-b from-[#dfe2e8] from-40% to-[#bfc5cf]">
      <div className="flex w-[62px] shrink-0 items-center justify-around border-r border-[#888] text-[#333]">
        {['M1 0v8M8 0v8L3 4z', 'M6 0v8L2 4z', 'M3 0v8l4-4z', 'M1 0v8l5-4zM8 0v8'].map((d) => (
          <button key={d} aria-label="Прокрутка листов">
            <svg viewBox="0 0 9 8" className="h-[7px] w-2" fill="currentColor" stroke="currentColor">
              <path d={d} />
            </svg>
          </button>
        ))}
      </div>
      <div className="flex min-w-0 flex-1 overflow-hidden">
        {sheets.map((sheet) => (
          <button
            key={sheet.name}
            className={`${sheet.width} relative flex shrink-0 items-center justify-center text-xs leading-[15px] whitespace-nowrap ${sheet.active ? 'bg-white font-bold text-[#333]' : 'text-[#444]'}`}
          >
            {sheet.name}
            {sheet.name === 'ГОСТ' ? (
              <span className="absolute right-0 bottom-0 h-full border-r border-[#777]" />
            ) : (
              <svg viewBox="0 0 14 15" className="absolute right-0 -mr-2 h-[15px] w-[14px]" fill="none">
                <path d="M1 15L13 0" stroke="#666" />
                <path d="M0 15l4-3v3z" fill="#555" />
              </svg>
            )}
          </button>
        ))}
      </div>
      <div className="flex w-[182px] shrink-0 items-center bg-[#3e3e3e]">
        <span className="h-full w-1 border border-[#777] bg-white" />
        <button aria-label="Влево" className="ml-1 border-y-4 border-r-[5px] border-y-transparent border-r-[#aaa]" />
        <div className="ml-2 flex h-[13px] w-[46px] items-center justify-center gap-[2px] bg-gradient-to-b from-white to-[#cacaca]">
          <span className="h-[6px] w-px bg-[#777]" />
          <span className="h-[6px] w-px bg-[#777]" />
          <span className="h-[6px] w-px bg-[#777]" />
          <span className="h-[6px] w-px bg-[#777]" />
        </div>
        <button aria-label="Вправо" className="mr-[6px] ml-auto border-y-4 border-l-[5px] border-y-transparent border-l-[#aaa]" />
      </div>
    </div>
  );
}

function StatusBar() {
  return (
    <footer className="flex h-[22px] shrink-0 items-center bg-gradient-to-b from-[#464a57] from-0% via-[#2d2d2d] via-45% to-[#363636] pl-[11px] text-[11px] text-white">
      <span className="w-[46px]">Готово</span>
      <span className="flex h-full w-[34px] items-center border-x border-[#595959] pl-2">
        <Svg>
          <path d="M1.500 2.500h13v11h-13z" fill="#e9f0fb" stroke="#9db8df" />
          <path d="M2 3h12v3H2z" fill="#4f7fd0" />
          <path d="M2 9.500h12M6 6v7M10 6v7" stroke="#8ba8d8" />
          <circle cx="3.500" cy="3.500" r="3" fill="#c9593a" />
        </Svg>
      </span>
      <div className="ml-auto flex gap-4 pr-[10px] whitespace-nowrap">
        <span>Среднее: 1.500838462</span>
        <span>Количество: 17</span>
        <span>Сумма: 19.5109</span>
      </div>
      <div className="flex h-full w-[264px] shrink-0 items-center border-l border-[#222] bg-gradient-to-b from-[#8c8c8c] to-[#474747] pl-1">
        <button aria-label="Обычный" className="flex h-[17px] w-[19px] items-center justify-center border border-[#c2902f] bg-[#ffd877]">
          <svg viewBox="0 0 13 11" className="h-[11px] w-[13px]" fill="#fff" stroke="#666">
            <path d="M.5.5h12v10H.5zM.5 3.500h12M.5 7.500h12M4.500.5v10M8.500.5v10" />
          </svg>
        </button>
        <button aria-label="Разметка страницы" className="flex h-[17px] w-[18px] items-center justify-center border border-[#777]">
          <svg viewBox="0 0 11 11" className="size-[11px]" fill="none" stroke="#ddd">
            <path d="M.5.5h10v10H.5zM3.500 2.500h4v6h-4z" />
          </svg>
        </button>
        <button aria-label="Страничный режим" className="flex h-[17px] w-[18px] items-center justify-center border border-[#777]">
          <svg viewBox="0 0 13 11" className="h-[11px] w-[13px]" fill="none" stroke="#ddd">
            <path d="M.5.5h12v10H.5zM4.500.5v6h4v-6" />
          </svg>
        </button>
        <span className="ml-[9px] w-[38px]">100%</span>
        <button aria-label="Уменьшить" className="flex size-[14px] shrink-0 items-center justify-center rounded-full border border-white bg-[#777] text-sm leading-3">
          −
        </button>
        <input
          type="range"
          aria-label="Масштаб"
          className="h-px w-[103px] appearance-none bg-[#e0e0e0] [&::-webkit-slider-thumb]:h-3 [&::-webkit-slider-thumb]:w-2 [&::-webkit-slider-thumb]:appearance-none [&::-webkit-slider-thumb]:rounded-b-full [&::-webkit-slider-thumb]:border [&::-webkit-slider-thumb]:border-white [&::-webkit-slider-thumb]:bg-[#777]"
        />
        <button aria-label="Увеличить" className="flex size-[14px] shrink-0 items-center justify-center rounded-full border border-white bg-[#777] text-sm leading-3">
          +
        </button>
        <svg viewBox="0 0 12 12" className="mt-1 ml-2 size-3" fill="#ccc">
          <path d="M8 0h2v2H8zM4 4h2v2H4zM8 4h2v2H8zM0 8h2v2H0zM4 8h2v2H4zM8 8h2v2H8z" />
        </svg>
      </div>
    </footer>
  );
}

export default function App() {
  return (
    <div className="h-screen bg-white pb-px font-['Open_Sans','Noto_Sans',sans-serif]">
      <div className="flex h-full w-[80.45%] flex-col overflow-hidden rounded-b-md bg-[#4a4a4a]">
        <TitleBar />
        <Ribbon />
        <FormulaBar />
        <Sheet />
        <SheetTabs />
        <StatusBar />
      </div>
    </div>
  );
}
